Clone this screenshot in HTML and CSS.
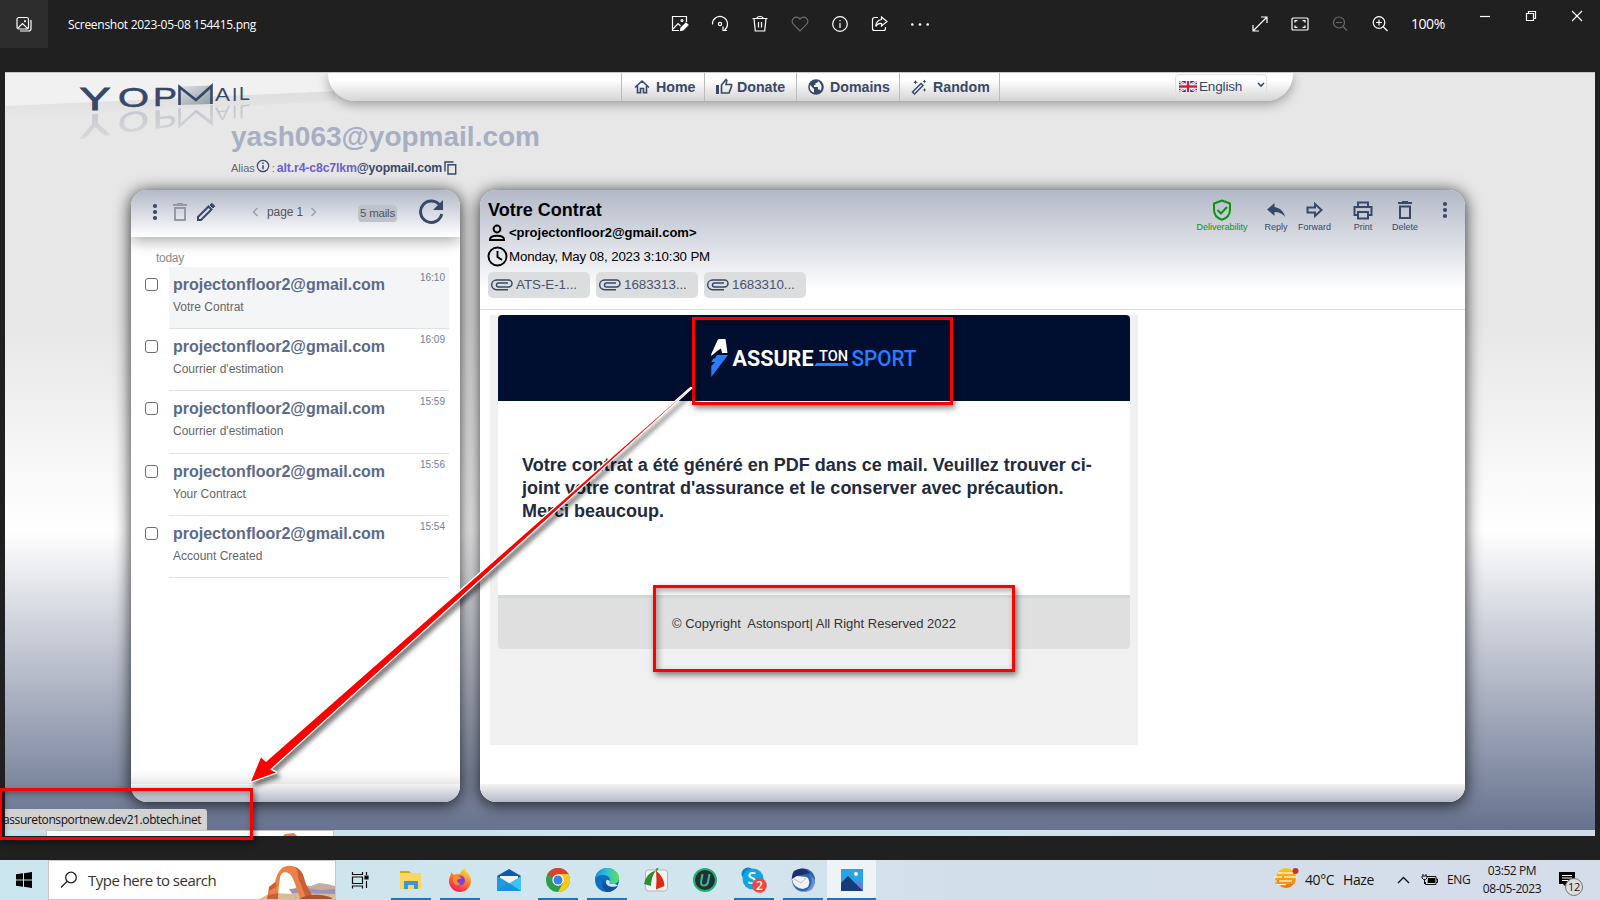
FILE: index.html
```html
<!DOCTYPE html>
<html lang="en">
<head>
<meta charset="utf-8">
<title>Screenshot 2023-05-08 154415.png</title>
<link rel="stylesheet" href="styles.css">
</head>
<body>
<div class="desktop">
  <header class="viewer-bar">
    <div class="app-tile"><svg width="16" height="16" viewBox="0 0 16 16" class="line"><rect x="1" y="1.5" width="11.5" height="11.5" rx="2"/><path d="M2 12l4.500-4.500 5 5M4 15h8.500a2.500 2.500 0 0 0 2.500-2.500V4M9 4.200v2M8 5.200h2"/></svg></div>
    <div class="file-name">Screenshot 2023-05-08 154415.png</div>
    <div class="tools tools-mid">
      <svg width="18" height="18" viewBox="0 0 18 18" class="line"><path d="M8 15.500H1.500V1.500h14V7M2 14l5-5.500 2.500 2.500"/><circle cx="11" cy="5.500" r="1"/><path d="M9.500 15.500l.5-2.500 5-5 2 2-5 5z" fill="#fff"/></svg>
      <svg width="18" height="18" viewBox="0 0 18 18" class="line"><path d="M1.500 9.500a7.500 7.500 0 1 1 12 5.500M12 11.500v4h4"/><circle cx="9" cy="9" r="1.600"/></svg>
      <svg width="18" height="18" viewBox="0 0 18 18" class="line"><path d="M1.500 3.500h15M6 3.500a3 2 0 0 1 6 0M3 3.500l1.300 12.500h9.400L15 3.500M7.500 7v5.500M10.500 7v5.500"/></svg>
      <svg width="18" height="18" viewBox="0 0 18 18" class="line dim"><path d="M9 16L2.300 9.200C-.5 5.800 2.500 1.700 6 2.100c1.500.2 2.300 1 3 2 .7-1 1.500-1.800 3-2 3.500-.4 6.500 3.700 3.700 7.100z"/></svg>
      <svg width="18" height="18" viewBox="0 0 18 18" class="line"><circle cx="9" cy="9" r="7.300"/><path d="M9 8v5M9 5v1.200"/></svg>
      <svg width="18" height="18" viewBox="0 0 18 18" class="line"><path d="M7 2.500H3.500a2 2 0 0 0-2 2v9a2 2 0 0 0 2 2h9a2 2 0 0 0 2-2V12M10.500 2l5.500 4.500-5.500 4.500V8.500c-3-.3-4.500.7-5.700 3 .2-4 2-6.500 5.700-7z"/></svg>
      <svg width="18" height="18" viewBox="0 0 18 18" fill="#fff"><circle cx="1.300" cy="9.500" r="1.300"/><circle cx="9" cy="9.500" r="1.300"/><circle cx="16.700" cy="9.500" r="1.300"/></svg>
    </div>
    <div class="tools tools-right">
      <svg width="18" height="18" viewBox="0 0 18 18" class="line"><path d="M2 16L16 2M10 2h6v6M2 10v6h6"/></svg>
      <svg width="18" height="18" viewBox="0 0 18 18" class="line"><rect x="1" y="3" width="16" height="12" rx="1"/><path d="M4 7.500V5.700h2.500M11.500 5.700H14v1.800M14 10.500v1.800h-2.500M6.500 12.300H4v-1.800"/></svg>
      <svg width="18" height="18" viewBox="0 0 18 18" class="line dim"><circle cx="8" cy="7.500" r="5.500"/><path d="M12 11.500l4 4M5 7.500h6"/></svg>
      <svg width="18" height="18" viewBox="0 0 18 18" class="line"><circle cx="8" cy="7.500" r="5.800"/><path d="M12 11.500l4.500 4.500M5 7.500h6M8 4.500v6"/></svg>
      <span class="zoom">100%</span>
    </div>
    <div class="window-buttons">
      <svg width="12" height="12" viewBox="0 0 12 12" class="line"><path d="M1 6.500h10"/></svg>
      <svg width="12" height="12" viewBox="0 0 12 12" class="line"><path d="M1.500 3.500h7v7h-7zM3.500 3.500v-2h7v7h-2"/></svg>
      <svg width="12" height="12" viewBox="0 0 12 12" class="line"><path d="M1 1l10 10M11 1L1 11"/></svg>
    </div>
  </header>

  <main class="photo">
    <svg class="slope" width="330" height="46" viewBox="0 0 330 46"><defs><linearGradient id="fade" x1="0" y1="0" x2="0" y2="1"><stop offset="0" stop-color="#dedede"/><stop offset="1" stop-color="#e7e7e7"/></linearGradient></defs><path d="M0 33L330 18V28L0 45z" fill="url(#fade)"/><path d="M0 0H330V18L0 33z" fill="#f1f1f1"/></svg>
    <div class="site-head">
      <svg class="yop-logo" width="323" height="75" viewBox="0 0 323 75">
        <defs>
          <linearGradient id="env" x1="0" y1="0" x2="1" y2="1"><stop offset="0" stop-color="#dfe4e6"/><stop offset="1" stop-color="#8f9ca0"/></linearGradient>
          <linearGradient id="rf" gradientUnits="userSpaceOnUse" x1="0" y1="36" x2="0" y2="68"><stop offset="0" stop-color="#fff" stop-opacity=".2"/><stop offset="1" stop-color="#fff" stop-opacity=".07"/></linearGradient>
          <mask id="rm"><rect width="323" height="75" fill="url(#rf)"/></mask>
          <g id="yop-letters" font-family="Liberation Sans" fill="#374869">
            <text x="74.500" y="36.500" font-size="32" textLength="31" lengthAdjust="spacingAndGlyphs" stroke="#374869" stroke-width=".9">Y</text>
            <text x="113" y="34" font-size="27.500" textLength="31" lengthAdjust="spacingAndGlyphs" stroke="#374869" stroke-width=".6">O</text>
            <text x="148" y="32.500" font-size="26" textLength="24" lengthAdjust="spacingAndGlyphs" stroke="#374869" stroke-width=".5">P</text>
            <text x="210" y="28" font-size="19" textLength="15" lengthAdjust="spacingAndGlyphs">A</text>
            <text x="227" y="27.500" font-size="19">I</text>
            <text x="234" y="27" font-size="19" textLength="11" lengthAdjust="spacingAndGlyphs">L</text>
          </g>
          <path id="yop-m" d="M174.500 32V14l16.500 13L206.500 13v18" fill="none" stroke="#374869" stroke-width="2.600"/>
        </defs>
        <path d="M174 13.500l32-1v18.500l-32 1z" fill="url(#env)"/>
        <use href="#yop-m"/><use href="#yop-letters"/>
        <g mask="url(#rm)"><g transform="matrix(1 -.127 0 -1 0 89.400)"><use href="#yop-m"/><use href="#yop-letters"/></g></g>
      </svg>
      <nav class="site-nav">
        <a class="nav-item home"><svg width="16" height="16" viewBox="0 0 16 16" fill="none" stroke="#374869" stroke-width="1.600"><path d="M1 8.500L8 2l7 6.500M3.500 7v6.700h3V9.500h3v4.200h3V7"/></svg>Home</a>
        <a class="nav-item donate"><svg width="18" height="17" viewBox="0 0 18 17"><path d="M1 7h3v9H1z" fill="#374869"/><path d="M6.500 7L11 1.500l.8 1L11 6.500h5.500v2L14 15H6.500z" fill="none" stroke="#374869" stroke-width="1.600"/></svg>Donate</a>
        <a class="nav-item domains"><svg width="16" height="16" viewBox="0 0 16 16"><circle cx="8" cy="8" r="7.800" fill="#374869"/><path d="M2 6l4 4v3.500C3 13 1 9.500 2 6zM10 2c0 1.500-.8 2-2.500 2v2H6v2h4v2.500h1.500l1 1c1.500-2 2-6-2.500-9.500z" fill="#f2f2f2"/></svg>Domains</a>
        <a class="nav-item random"><svg width="16" height="16" viewBox="0 0 16 16"><path d="M1.500 13L10 4.500l2 2L3.500 15z" fill="none" stroke="#374869" stroke-width="1.500"/><path d="M4.500 1l.7 1.600 1.600.7-1.600.7-.7 1.600-.7-1.600-1.600-.7 1.600-.7zM13.500.5l.6 1.400 1.400.6-1.400.6-.6 1.400-.6-1.400-1.400-.6 1.400-.6zM13.500 9l.6 1.400 1.400.6-1.400.6-.6 1.400-.6-1.400-1.400-.6 1.400-.6z" fill="#374869"/></svg>Random</a>
        <div class="lang"><svg width="18" height="11" viewBox="0 0 18 11"><path fill="#243f85" d="M0 0h18v11H0z"/><path d="M0 0l18 11M18 0L0 11" stroke="#fff" stroke-width="2.400"/><path d="M0 0l18 11M18 0L0 11" stroke="#d7334a" stroke-width=".7"/><path d="M9 0v11M0 5.500h18" stroke="#fff" stroke-width="4.500"/><path d="M9 0v11M0 5.500h18" stroke="#d01f3a" stroke-width="2.400"/></svg><span>English</span><svg class="caret" width="8" height="6" viewBox="0 0 8 6"><path d="M1 1l3 3 3-3" fill="none" stroke="#374869" stroke-width="1.600"/></svg></div>
      </nav>
    </div>
    <div class="identity">
      <div class="address">yash063@yopmail.com</div>
      <div class="alias"><span>Alias</span><svg class="info" width="14" height="14" viewBox="0 0 14 14" fill="none" stroke="#374869"><circle cx="7" cy="7" r="5.700" stroke-width="1.200"/><path d="M7 6.200v4M7 3.600v1.400" stroke-width="1.500"/></svg><span class="colon">:</span><b>alt.r4-c8c7lkm</b><b class="domain">@yopmail.com</b><svg width="13" height="14" viewBox="0 0 13 14" fill="none" stroke="#374869" stroke-width="1.400"><path d="M1 10.500V1h8.500"/><path d="M4 3.800h7.700v9.200H4z"/></svg></div>
    </div>

    <div class="panels">
      <section class="inbox">
        <div class="inbox-bar">
          <svg width="6" height="18" viewBox="0 0 6 18" fill="#374869"><circle cx="3" cy="3" r="2.100"/><circle cx="3" cy="9" r="2.100"/><circle cx="3" cy="15" r="2.100"/></svg>
          <svg class="ib-trash" width="16" height="20" viewBox="0 0 16 20" fill="none" stroke="#96999e" stroke-width="2"><path d="M1 3h14M5 2h6M3 6h10v12H3z"/></svg>
          <svg class="ib-pen" width="20" height="20" viewBox="0 0 20 20" fill="none" stroke="#374869" stroke-width="2"><path d="M2 18v-3L12.500 4.500l3 3L5 18z"/><path d="M14 3l1.800-1.800 3 3L17 6z" fill="#374869" stroke-width="1"/></svg>
          <svg class="ib-prev" width="7" height="10" viewBox="0 0 7 10" fill="none" stroke="#999da5" stroke-width="1.400"><path d="M5.500 1L1.500 5l4 4"/></svg>
          <span class="page-no">page 1</span>
          <svg width="7" height="10" viewBox="0 0 7 10" fill="none" stroke="#999da5" stroke-width="1.400"><path d="M1.500 1l4 4-4 4"/></svg>
          <span class="count">5 mails</span>
          <svg class="ib-reload" width="26" height="26" viewBox="0 0 26 26"><path d="M22 6.500A10.700 10.700 0 1 0 23.700 15" fill="none" stroke="#374869" stroke-width="3"/><path d="M25 1v10H15z" fill="#374869"/></svg>
        </div>
        <div class="inbox-list">
          <div class="day">today</div>
          <div class="mail"><i class="check"></i><div class="mail-body selected"><b>projectonfloor2@gmail.com</b><time>16:10</time><p>Votre Contrat</p></div></div>
          <div class="mail"><i class="check"></i><div class="mail-body"><b>projectonfloor2@gmail.com</b><time>16:09</time><p>Courrier d'estimation</p></div></div>
          <div class="mail"><i class="check"></i><div class="mail-body"><b>projectonfloor2@gmail.com</b><time>15:59</time><p>Courrier d'estimation</p></div></div>
          <div class="mail"><i class="check"></i><div class="mail-body"><b>projectonfloor2@gmail.com</b><time>15:56</time><p>Your Contract</p></div></div>
          <div class="mail"><i class="check"></i><div class="mail-body"><b>projectonfloor2@gmail.com</b><time>15:54</time><p>Account Created</p></div></div>
        </div>
        <div class="panel-foot"></div>
      </section>

      <section class="reader">
        <div class="reader-head">
          <div class="meta">
            <h1>Votre Contrat</h1>
            <div class="from"><svg width="18" height="18" viewBox="0 0 18 18" fill="none" stroke="#000" stroke-width="2"><circle cx="9" cy="5" r="3.400"/><path d="M2 15.500c0-5 14-5 14 0v.5H2z"/></svg><b>&lt;projectonfloor2@gmail.com&gt;</b></div>
            <div class="date"><svg width="21" height="21" viewBox="0 0 21 21" fill="none" stroke="#000" stroke-width="1.900"><circle cx="10.500" cy="10.500" r="9"/><path d="M10.500 5v6l4.500 3"/></svg><span>Monday, May 08, 2023 3:10:30 PM</span></div>
            <div class="files">
              <span class="file"><svg width="23" height="12" viewBox="0 0 23 12" class="clip"><path d="M18 10.700H6.500a4.800 4.800 0 0 1 0-9.700H18.500a3.500 3.500 0 0 1 0 7H8.500a2 2 0 0 1 0-4H18"/></svg><em>ATS-E-1...</em></span>
              <span class="file"><svg width="23" height="12" viewBox="0 0 23 12" class="clip"><path d="M18 10.700H6.500a4.800 4.800 0 0 1 0-9.700H18.500a3.500 3.500 0 0 1 0 7H8.500a2 2 0 0 1 0-4H18"/></svg><em>1683313...</em></span>
              <span class="file"><svg width="23" height="12" viewBox="0 0 23 12" class="clip"><path d="M18 10.700H6.500a4.800 4.800 0 0 1 0-9.700H18.500a3.500 3.500 0 0 1 0 7H8.500a2 2 0 0 1 0-4H18"/></svg><em>1683310...</em></span>
            </div>
          </div>
          <div class="actions">
            <div class="action deliver"><svg width="22" height="22" viewBox="0 0 22 22" fill="none" stroke="#0a9410" stroke-width="2"><path d="M11 1.500l8 3v6c0 5-3.300 8.800-8 10.300-4.700-1.500-8-5.300-8-10.300v-6z"/><path d="M6.500 11l3.500 3.500L16 8"/></svg><span>Deliverability</span></div>
            <div class="action reply"><svg width="22" height="22" viewBox="0 0 22 22"><path d="M2 10.500L9.500 4v4c5.500.8 9.500 4.500 10.500 10-2.500-3.500-6-5-10.500-5v4z" fill="#374869"/></svg><span>Reply</span></div>
            <div class="action forward"><svg width="22" height="22" viewBox="0 0 22 22" fill="none" stroke="#374869" stroke-width="2"><path d="M3.500 8.500H11V5l6.500 6-6.500 6v-3.500H3.500z"/></svg><span>Forward</span></div>
            <div class="action print"><svg width="22" height="22" viewBox="0 0 22 22" fill="none" stroke="#374869" stroke-width="2"><path d="M6 8V3.500h10V8M6 16H2.500V8h17v8H16M6 13h10v6.500H6z"/></svg><span>Print</span></div>
            <div class="action delete"><svg width="22" height="22" viewBox="0 0 22 22" fill="none" stroke="#374869" stroke-width="2"><path d="M4 4h14M8 3h6M6 7.500h10V19H6z"/></svg><span>Delete</span></div>
            <svg class="more" width="6" height="18" viewBox="0 0 6 18" fill="#374869"><circle cx="3" cy="3" r="2.100"/><circle cx="3" cy="9" r="2.100"/><circle cx="3" cy="15" r="2.100"/></svg>
          </div>
        </div>
        <div class="message">
          <div class="message-card">
            <div class="brand">
              <svg width="215" height="40" viewBox="0 0 215 40">
                <path d="M.3 16L6.500 2.200Q7 1 9 1h5.500l2 14H11l-1-4.500-3.200 2L.3 18z" fill="#fff"/>
                <path d="M6 17h11L.3 39V28l4-4H.3l2-3.500H4z" fill="#2a7cff"/>
                <text x="21.500" y="28" class="ats" fill="#fff" font-size="22.500" textLength="81" lengthAdjust="spacingAndGlyphs">ASSURE</text>
                <text x="108" y="22.500" class="ats thin" fill="#fff" font-size="14.500" textLength="29" lengthAdjust="spacingAndGlyphs">TON</text>
                <path d="M105.500 25H137v3h-34z" fill="#2a7cff"/>
                <text x="140.500" y="28" class="ats sport" fill="#2a7cff" font-size="22.500" textLength="65" lengthAdjust="spacingAndGlyphs">SPORT</text>
              </svg>
            </div>
            <div class="copy"><div>Votre contrat a été généré en PDF dans ce mail. Veuillez trouver ci-</div><div>joint votre contrat d'assurance et le conserver avec précaution.</div><div>Merci beaucoup.</div></div>
            <div class="legal">© Copyright&nbsp; Astonsport| All Right Reserved 2022</div>
          </div>
        </div>
        <div class="panel-foot"></div>
      </section>
    </div>
    <div class="mini-taskbar"><div class="mini-search"><svg width="20" height="6" viewBox="0 0 20 6"><path d="M0 6l3-3 9-1 4 4z" fill="#e8824e"/></svg></div></div>
  </main>

  <footer class="taskbar">
    <div class="start"><svg width="16" height="16" viewBox="0 0 16 16"><path d="M0 2.300l7-1v6.200H0zM8 1.200L16 0v7.500H8zM0 8.500h7v6.200l-7-1zM8 8.500h8V16l-8-1.200z"/></svg></div>
    <div class="search"><svg class="lens" width="18" height="18" viewBox="0 0 18 18" fill="none" stroke="#222" stroke-width="1.300"><circle cx="11" cy="6.500" r="5.300"/><path d="M7.200 10.300L1 16.500"/></svg><span>Type here to search</span>
      <svg class="arch" width="76" height="37" viewBox="0 0 76 37"><path d="M34 27l10-4 8 1 8-3 8 1 8 2v13H34z" fill="#c9aaa0"/><path d="M30 27l16-1 16 2 14-1v6H34z" fill="#9a94b8"/><path d="M34 31l42 1v5H38zM0 37l12-6 24 1v5z" fill="#d8bb98"/><path d="M8 37l2-12 6-5C18 12 21 5 28 4c8-1 14 3 16 12 2 6 5 9 9 20H41c-3-8-4-13-8-21-3-6-11-7-12 1-1 7-2 15-2 21z" fill="#ec8049"/><path d="M36 5c6 2 8 6 10 14 1 5 5 8 8 17h-7c-3-8-4-12-7-18-2-5 0-8-4-13zM10 25l7-5v5l-7 4zM9 33l10-2v6H8z" fill="#cb5f33"/><path d="M40 37c8-5 22-6 33-1v1z" fill="#a8542f"/></svg>
    </div>
    <div class="task view"><svg width="18" height="18" viewBox="0 0 18 18" fill="none" stroke="#111" stroke-width="1.200"><path d="M1.500 1v2.500h10V1M1.500 6h10v6.500h-10zM1.500 17.500V15h10v2.500M15.500 1v3M15.500 10v7"/><path d="M14 5h3v3h-3z" fill="#111"/></svg></div>
    <div class="task open"><svg width="24" height="24" viewBox="0 0 24 24"><path d="M1 3h9l2 2v6H1z" fill="#dba313"/><path d="M1 5h21v16H1z" fill="#fcd462"/><path d="M5 21v-8h14v8h-4v-4H9v4z" fill="#3b95dc"/></svg></div>
    <div class="task open"><svg width="24" height="24" viewBox="0 0 24 24"><defs><linearGradient id="ff" x1=".8" y1="0" x2=".3" y2="1"><stop offset="0" stop-color="#ffe83c"/><stop offset=".5" stop-color="#ff7a2b"/><stop offset="1" stop-color="#ed1c67"/></linearGradient></defs><path d="M3 4l3 3q3-2 6-1c1-3 3-5 5-6 0 4 6 6 6 13a11 11 0 0 1-22 0c0-4 2-5 2-9z" fill="url(#ff)"/><circle cx="12" cy="12.500" r="5" fill="#8140cf"/><path d="M5 9q5-3 9 1l-5 2q0 3 4 4-6 3-8-3z" fill="#ff8a23"/></svg></div>
    <div class="task"><svg width="24" height="24" viewBox="0 0 24 24"><path d="M0 8l12-7 12 7v15H0z" fill="#0b5cab"/><path d="M3 8h18v8H3z" fill="#f2f2f2"/><path d="M0 8l12 7-12 8z" fill="#1f9be0"/><path d="M24 8L0 23h24z" fill="#40c3f4"/><path d="M12 15l12 8H0z" fill="#1893dc"/></svg></div>
    <div class="task open"><svg width="24" height="24" viewBox="0 0 24 24"><circle cx="12" cy="12" r="12" fill="#2e9e4c"/><path d="M12 12L1.600 6A12 12 0 0 1 22.400 6z" fill="#df3e31"/><path d="M12 6h10.400A12 12 0 0 1 12 24l5-9z" fill="#fbc817"/><circle cx="12" cy="12" r="5.700" fill="#fff"/><circle cx="12" cy="12" r="4.500" fill="#3a80ee"/></svg></div>
    <div class="task open"><svg width="24" height="24" viewBox="0 0 24 24"><defs><linearGradient id="ed" x1="0" y1="0" x2="1" y2="0"><stop offset="0" stop-color="#1b8fdb"/><stop offset=".5" stop-color="#2fc0d8"/><stop offset="1" stop-color="#62e052"/></linearGradient></defs><circle cx="12" cy="12" r="12" fill="#0c6fc2"/><path d="M0 11C1 4 6 0 12 0c7 0 12 5 12 10 0 4-3 6-7 6-3 0-3-1-2-2 1-4-2-7-7-7-4 0-7 2-8 4z" fill="url(#ed)"/><path d="M9 12c0 5 5 9 14 6-3 4-7 6-11 6-5-2-6-9-3-12z" fill="#174f9c"/><path d="M15 14c-1 1-1 2 2 2h3l3 1.500c-5 3-12 .5-12-3.500 0-3 4-2 4 0z" fill="#d4e7f0"/></svg></div>
    <div class="task"><svg width="24" height="24" viewBox="0 0 24 24"><rect x="1.500" y="2" width="22" height="21" rx="3" fill="#f4f4f4" stroke="#b4b4b4"/><path d="M0 16Q2 5 12 2.500Q7 9 7 18z" fill="#2c8e32"/><path d="M12 2.500Q20 9 20.500 18L12 21.500Q13 12 12 2.500z" fill="#df2a12"/><path d="M12 2.500l2-2.500" stroke="#2c8e32" stroke-width="1.500"/></svg></div>
    <div class="task"><svg width="24" height="24" viewBox="0 0 24 24"><circle cx="12" cy="12" r="11" fill="#262c3b" stroke="#20b26b" stroke-width="2"/><path d="M9.500 6L8 14q-.3 3.500 3 3.500T15 14l1.500-8" fill="none" stroke="#2ec27b" stroke-width="2"/></svg></div>
    <div class="task open"><svg width="26" height="26" viewBox="0 0 26 26"><circle cx="7" cy="7" r="6.500" fill="#0b87c9"/><circle cx="12" cy="12" r="10.500" fill="#12a5e6"/><circle cx="17" cy="18" r="6" fill="#12a5e6"/><text x="6.500" y="17" class="badge-text" font-size="16">S</text><circle cx="18.500" cy="18.500" r="7.300" fill="#f3453b"/><text x="15" y="23" class="badge-text" font-size="12">2</text></svg></div>
    <div class="task open"><svg width="24" height="24" viewBox="0 0 24 24"><circle cx="12.500" cy="12" r="11.500" fill="#2a66b1"/><path d="M3 3Q12-3 19 5l-8 2q-8 0-10 6-1-6 2-10z" fill="#1f2f6b"/><path d="M1 11l5-3 10 1q4 4 1 10l-5 2Q2 20 1 11z" fill="#f1f2f5"/><path d="M3 11l7 4 6-6" fill="none" stroke="#b3bac6"/><path d="M18 6q5 6 1 13l-5 5q10-1 10-12z" fill="#6b8fd0"/></svg></div>
    <div class="task open active"><svg width="22" height="22" viewBox="0 0 22 22"><path d="M0 0h22v22H0z" fill="#27a4e8"/><path d="M11 18l6-7 5 5v6H11z" fill="#6f78e0"/><path d="M0 14l7-7 15 15H0z" fill="#163b78"/><circle cx="15" cy="5" r="2" fill="#fff"/></svg></div>
    <div class="tray">
      <svg class="haze" width="26" height="22" viewBox="0 0 26 22"><defs><linearGradient id="hz" x1="0" y1="0" x2="0" y2="1"><stop offset="0" stop-color="#fccb0b"/><stop offset="1" stop-color="#ee6a14"/></linearGradient></defs><circle cx="12" cy="11" r="10" fill="url(#hz)"/><path d="M4 6h15M0 10h8M10 10h13M5 14h13M3 17.500h9" stroke="#fff0cc" stroke-width="1.300"/><path d="M1 12h20M1 16h20" stroke="#f39a1b" stroke-width="1.600"/><circle cx="21.500" cy="4" r="3" fill="#cb2f26"/></svg>
      <span class="temp">40°C</span><span class="cond">Haze</span>
      <svg class="up" width="13" height="8" viewBox="0 0 13 8" fill="none" stroke="#111" stroke-width="1.400"><path d="M1 7l5.500-5.500L12 7"/></svg>
      <svg class="batt" width="17" height="12" viewBox="0 0 17 12"><path d="M6 2.500h9v8H4.500V8M15 5h1.500v3.500H15" fill="none" stroke="#111"/><path d="M7 4h7v5H6.500z"/><path d="M1 2h5v2L4.500 5.500h-2L1 4zM2 0v2M5 0v2M3.500 5v5" fill="none" stroke="#111"/></svg>
      <span class="eng">ENG</span>
      <div class="clock"><span>03:52 PM</span><span>08-05-2023</span></div>
      <div class="notice"><svg width="16" height="16" viewBox="0 0 16 16"><path d="M0 0h16v12H7v3l-3-3H0z"/><path d="M3 3.500h10M3 6h10M3 8.500h6" stroke="#fff"/></svg><span class="num">12</span></div>
    </div>
  </footer>

  <div class="status">assuretonsportnew.dev21.obtech.inet</div>
  <div class="mark mark-logo"></div>
  <div class="mark mark-legal"></div>
  <div class="mark mark-url"></div>
  <svg class="arrow" width="470" height="420" viewBox="240 375 470 420"><path d="M691 388L266 762 261 757.500 251 781.500 276 772.500 270 769.500z" fill="#f00" stroke="#fff" stroke-width="2.600" stroke-linejoin="round" paint-order="stroke"/></svg>
</div>
</body>
</html>
```
FILE: styles.css
```css
* { box-sizing: border-box; }
body { margin: 0; background: #202020; font-family: "Liberation Sans", Arial, sans-serif; color: #374869; overflow: hidden; }
svg { display: block; flex: none; }
p, h1 { margin: 0; }
.desktop { position: relative; width: 1600px; height: 900px; display: flex; flex-direction: column; overflow: hidden; white-space: nowrap; }
.line { fill: none; stroke: #fff; stroke-width: 1.2; }
.dim { stroke: #6b6b6b; }

/* viewer title bar */
.viewer-bar { height: 72px; flex: none; display: flex; align-items: flex-start; color: #fff; font-family: "Open Sans", "Noto Sans", sans-serif; }
.app-tile { width: 48px; height: 48px; background: #2d2d2d; display: grid; place-items: center; }
.file-name { width: 602px; padding-left: 20px; font-size: 12px; line-height: 49px; letter-spacing: -.28px; }
.tools { display: flex; align-items: center; height: 48px; gap: 22px; }
.tools-mid { width: 600px; padding-left: 21px; }
.tools-right { width: 215px; padding-left: 1px; }
.zoom { font-size: 14px; letter-spacing: -.45px; margin-top: -2px; }
.window-buttons { display: flex; gap: 34px; padding: 10px 0 0 14px; }

/* viewed page */
.photo { position: relative; margin: 0 5px; height: 764px; flex: none; overflow: hidden; border-top: 1px solid #c6c6c6; background: linear-gradient(#e7e7e7 0, #e7e7e7 33%, #fff 60%, #636f8c 100%); }
.slope { position: absolute; left: 0; top: 0; }
.site-head { position: relative; display: flex; height: 28px; }
.yop-logo { overflow: visible; }
.site-nav { width: 965px; height: 28px; display: flex; padding-left: 293px; border-radius: 0 0 27px 27px; background: linear-gradient(#fff 25%, #d4d4d4); box-shadow: 0 3px 12px rgba(0,0,0,.35); font-size: 14.2px; font-weight: bold; clip-path: inset(0 -20px -20px -20px); }
.nav-item { display: flex; align-items: center; border-left: 1px solid #bbb; padding: 0 0 1px 12px; gap: 6px; }
.home { width: 83px; }
.donate { width: 92px; padding-left: 10px; gap: 4px; }
.domains { width: 103px; padding-left: 11px; }
.random { width: 101px; padding-left: 11px; border-right: 1px solid #bbb; }
.lang { width: 92px; height: 24px; margin: 1px 0 0 175px; display: flex; align-items: center; padding-left: 3px; gap: 2px; border: 1px solid #e0e0e0; border-radius: 4px; font-size: 13.6px; font-weight: normal; letter-spacing: -.2px; }
.caret { margin: -2px 0 0 13px; }
.identity { position: relative; height: 89px; padding: 20px 0 0 226px; }
.address { font-size: 28px; line-height: 32px; font-weight: bold; color: #a6afc3; }
.alias { display: flex; align-items: center; height: 20px; margin-top: 5px; font-size: 11px; color: #666; }
.alias b { font-size: 12.3px; color: #6a5fcf; letter-spacing: -.15px; }
.alias .domain { color: #374869; }
.alias .domain + svg { margin-left: 2px; }
.info { margin: -5px 2px 0 1px; }
.colon { width: 5px; }

.panels { display: flex; gap: 20px; padding-left: 126px; }
.inbox, .reader { height: 612px; display: flex; flex-direction: column; border-radius: 16px; background: #fff; box-shadow: 0 2px 16px 1px rgba(0,0,0,.75); overflow: hidden; }
.inbox { width: 329px; }
.reader { width: 985px; }
.panel-foot { height: 18px; flex: none; margin-top: auto; background: linear-gradient(#f4f4f6, #b3b9c7); }
.inbox-bar { position: relative; height: 47px; flex: none; display: flex; align-items: center; padding: 0 0 4px 21px; background: linear-gradient(#b3b9c8, #fff); box-shadow: 0 4px 14px rgba(0,0,0,.33); font-size: 12px; color: #555; }
.ib-trash { margin-left: 14px; }
.ib-pen { margin-left: 8px; }
.ib-prev { margin-left: 36px; }
.page-no { width: 43px; margin-left: 8px; font-size: 12px; letter-spacing: -.1px; }
.count { margin: 3px 0 0 41px; width: 39px; height: 17px; line-height: 17px; background: #bdc2cd; border-radius: 4px; text-align: center; font-size: 11.5px; letter-spacing: -.2px; }
.ib-reload { margin-left: 21px; }
.inbox-list { flex: 1; box-shadow: inset 0 -14px 12px -10px rgba(0,0,0,.13); }
.day { height: 30px; padding: 14px 0 0 25px; font-size: 12px; line-height: 14px; letter-spacing: -.3px; color: #8b8b8b; }
.mail { display: flex; height: 62.2px; }
.check { width: 13px; height: 13px; margin: 11px 11px 0 14px; border: 1px solid #6d6d6d; border-radius: 3px; background: #fff; }
.mail-body { width: 280px; display: grid; grid-template-columns: 1fr auto; align-content: start; padding: 8px 4px 0 4px; border-bottom: 1px solid #dfe1e6; }
.selected { background: #f4f5f7; }
.mail-body b { font-size: 16px; line-height: 20px; color: #5a6a8a; }
.mail-body time { font-size: 10px; line-height: 12px; margin-top: -3px; color: #717e99; }
.mail-body p { font-size: 12px; line-height: 16px; margin-top: 4px; color: #666; }

.reader-head { height: 120px; flex: none; display: flex; justify-content: space-between; border-bottom: 1px solid #dedede; background: linear-gradient(#b3b9c8, #fff 85%); }
.meta { padding: 10px 0 0 8px; color: #000; }
.meta h1 { font-size: 18px; line-height: 21px; }
.from, .date { display: flex; align-items: center; }
.from { height: 22px; font-size: 13px; gap: 3px; }
.from svg { margin-top: 1px; }
.date { height: 24px; margin: 1px 0 0 -1px; font-size: 13.3px; letter-spacing: -.16px; gap: 1px; }
.files { display: flex; gap: 6px; margin-top: 4px; }
.file { width: 102px; height: 26px; display: flex; align-items: center; gap: 3px; padding-left: 2px; background: #dcdddf; border-radius: 5px; color: #46546f; font-size: 13.4px; letter-spacing: -.05px; }
.file em { font-style: normal; margin-top: -1px; }
.clip { fill: none; stroke: #374869; stroke-width: 1.5; }
.actions { display: flex; padding: 9px 17px 0 0; font-size: 9px; }
.action { display: flex; flex-direction: column; align-items: center; line-height: 12px; }
.deliver { width: 70px; color: #0a9410; }
.reply { width: 38px; }
.forward { width: 39px; }
.print { width: 58px; }
.delete { width: 26px; }
.more { margin: 2px 0 0 24px; }
.message { width: 648px; height: 430px; margin: 5px 0 0 10px; padding: 0 8px; background: #f0f0f0; }
.message-card { border-radius: 4px; overflow: hidden; background: #fff; }
.brand { height: 86px; padding: 23px 0 0 213px; background: #000e2f; }
.ats { font-family: "Roboto", sans-serif; font-weight: 700; }
.thin, .sport { font-weight: 500; }
.copy { height: 194px; padding: 53px 0 0 24px; font-size: 18px; line-height: 23px; font-weight: bold; color: #212a3e; }
.legal { height: 54px; border-top: 3px solid #d0dadd; padding-left: 174px; background: #dfdfdf; color: #333; font-size: 13px; line-height: 52px; }
.mini-taskbar { position: absolute; left: 0; right: 0; bottom: 0; height: 6px; background: linear-gradient(90deg, #c7e0eb, #cfe4ee 50%, #d2dbe9); padding-left: 41px; }
.mini-search { width: 288px; height: 6px; background: #fff; border: 1px solid #c5c5c5; border-bottom: 0; padding-left: 235px; }

/* Windows taskbar */
.taskbar { height: 40px; margin-top: 24px; flex: none; display: flex; background: linear-gradient(90deg, #cbe5ee, #d2e5ee 45%, #d2dfea 60%, #d5dcea); color: #151515; font-family: "Open Sans", "Noto Sans", sans-serif; }
.start { width: 48px; display: grid; place-items: center; }
.search { position: relative; width: 288px; display: flex; align-items: center; border: 1px solid #c5c8ca; background: #fff; padding-left: 11px; gap: 10px; font-size: 15px; letter-spacing: -.52px; color: #333; }
.arch { position: absolute; right: 0; bottom: 0; }
.task { width: 49px; display: grid; place-items: center; }
.task svg { grid-area: 1 / 1; }
.view { width: 50px; }
.view svg { margin-right: 2px; }
.open { position: relative; }
.open::after { content: ""; position: absolute; left: 5px; right: 4px; bottom: 0; height: 2px; background: #0a79d8; }
.active { background: #edf3f7; }
.active::after { left: 0; right: 0; }
.badge-text { font-family: "Open Sans", sans-serif; font-weight: 600; fill: #fff; }
.tray { margin-left: auto; display: flex; align-items: center; height: 40px; font-size: 14px; letter-spacing: -.4px; }
.haze { margin-top: -4px; }
.temp { width: 38px; margin: -1px 0 0 5px; }
.cond { width: 54px; margin-top: -1px; }
.batt { margin-left: 11px; }
.eng { width: 28px; margin: -2px 0 0 9px; font-size: 12px; }
.clock { width: 70px; margin-left: 2px; display: flex; flex-direction: column; align-items: center; font-size: 12px; line-height: 18px; letter-spacing: -.42px; }
.notice { position: relative; width: 53px; padding-left: 12px; }
.num { position: absolute; left: 18px; top: 6px; width: 18px; height: 18px; border: 1px solid #777; border-radius: 50%; background: #ddd; font-size: 11px; line-height: 15px; text-align: center; }

/* browser link preview and annotations, drawn over the page */
.status { position: absolute; left: 2px; top: 809px; width: 205px; height: 21px; background: linear-gradient(90deg, #202020 3px, #d2d2d2 3px); border-radius: 0 3px 0 0; color: #111; padding-left: 1px; font: 12px/21px "Open Sans", "Noto Sans", sans-serif; letter-spacing: -.4px; }
.mark { position: absolute; border: 3px solid #f00; box-shadow: 2px 3px 6px rgba(0,0,0,.5), inset 2px 3px 6px rgba(0,0,0,.35); }
.mark-logo { left: 692px; top: 317px; width: 261px; height: 88px; }
.mark-legal { left: 653px; top: 585px; width: 362px; height: 87px; }
.mark-url { left: 0; top: 788px; width: 253px; height: 52px; border-left-width: 2px; }
.arrow { position: absolute; left: 240px; top: 375px; filter: drop-shadow(3px 4px 2px rgba(0,0,0,.5)); }
```
